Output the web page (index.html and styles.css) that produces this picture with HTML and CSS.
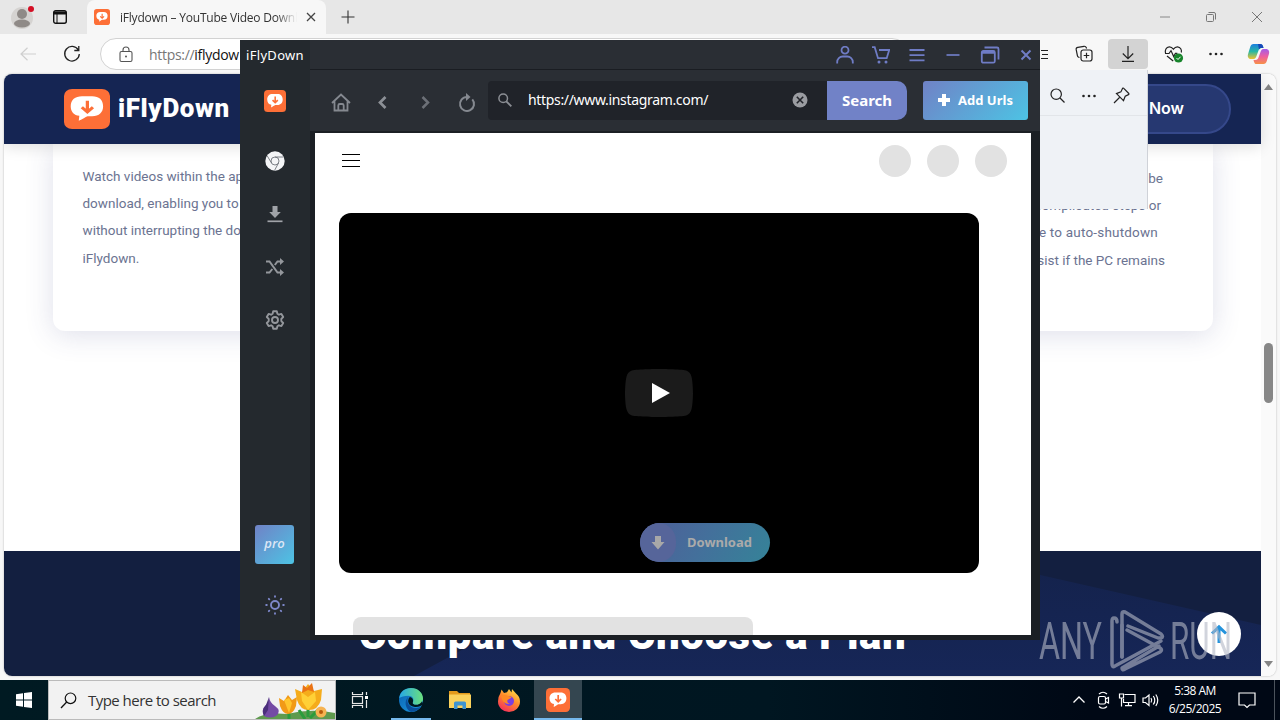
FILE: index.html
```html
<!DOCTYPE html>
<html lang="en">
<head>
    <meta charset="UTF-8">
    <meta name="viewport" content="width=device-width, initial-scale=1.0">
    <title>iFlyDown</title>
    <link rel="stylesheet" href="styles.css">
</head>
<body>
    <svg class="defs">
        <linearGradient id="edgeBlue" x1="0" y1="0" x2="1" y2="1"><stop offset="0" stop-color="#0b5fb0"/><stop offset="1" stop-color="#1b9de2"/></linearGradient>
        <linearGradient id="edgeTop" x1="0" y1="0" x2="1" y2="0"><stop offset="0" stop-color="#25a8e8"/><stop offset="1" stop-color="#6be07c"/></linearGradient>
        <linearGradient id="fox" x1="0.8" y1="0" x2="0.2" y2="1"><stop offset="0" stop-color="#ffe14a"/><stop offset="0.45" stop-color="#ff8a2a"/><stop offset="1" stop-color="#f5285f"/></linearGradient>
        <linearGradient id="copA" x1="0" y1="0" x2="0" y2="1"><stop offset="0" stop-color="#1c7fe0"/><stop offset="0.5" stop-color="#28b7a4"/><stop offset="1" stop-color="#f2c230"/></linearGradient>
        <linearGradient id="copB" x1="0" y1="0" x2="0" y2="1"><stop offset="0" stop-color="#a35be8"/><stop offset="0.5" stop-color="#ee5ea0"/><stop offset="1" stop-color="#f79147"/></linearGradient>
        <symbol id="logo" viewBox="0 0 24 24" preserveAspectRatio="none">
            <rect width="24" height="24" rx="4.2" fill="#fd6f37"/>
            <path d="M9.4 4.4h5.3c3.6 0 5.7 2.2 5.7 5.9s-2.1 5.9-5.7 6h-2.4c-1.2.6-2.5 1.600-4.600 2.800l.3-3c-2.800-.4-4.500-2.500-4.500-5.800 0-3.700 2.300-5.900 5.900-5.900z" fill="#fff"/>
            <path d="M12.200 7v6.500M9.300 11l2.900 2.800 2.900-2.800" fill="none" stroke="#fd6f37" stroke-width="1.700"/>
        </symbol>
    </svg>

    <div class="browser">
        <div class="tab-strip">
            <svg class="avatar" width="26" height="26" viewBox="0 0 26 26"><circle cx="12" cy="14" r="11" fill="#d5d3d1"/><circle cx="12" cy="10" r="5" fill="#8f8a87"/><ellipse cx="12" cy="19.500" rx="8" ry="4" fill="#8f8a87"/><circle cx="21" cy="5" r="3" fill="#d40f25"/></svg>
            <svg class="tab-actions" width="16" height="16" viewBox="0 0 16 16"><rect x="1.700" y="1.700" width="12.600" height="12.600" rx="2" fill="none" stroke="#111" stroke-width="1.400"/><path d="M2 3h12v2H2zM5 5v9" fill="#111" stroke="#111" stroke-width="1"/></svg>
            <div class="tab">
                <svg width="16" height="16"><use href="#logo"/></svg>
                <span class="tab-title">iFlydown – YouTube Video Downloader</span>
                <svg width="10" height="10" viewBox="0 0 10 10"><path d="M1 1l8 8M9 1L1 9" stroke="#444" stroke-width="1.300"/></svg>
            </div>
            <svg class="new-tab" width="14" height="14" viewBox="0 0 14 14"><path d="M7 0.500v13M0.500 7h13" stroke="#333" stroke-width="1.100"/></svg>
            <div class="win-buttons">
                <svg width="12" height="12" viewBox="0 0 12 12"><path d="M1 6h10" stroke="#888"/></svg>
                <svg width="12" height="12" viewBox="0 0 12 12"><g fill="none" stroke="#777"><rect x="1.500" y="3.500" width="7" height="7" rx="1"/><path d="M3.500 1.500h5.500a1.500 1.500 0 0 1 1.500 1.500v5.500"/></g></svg>
                <svg width="12" height="12" viewBox="0 0 12 12"><path d="M1 1l10 10M11 1L1 11" stroke="#777"/></svg>
            </div>
        </div>

        <div class="toolbar">
            <svg class="back" width="16" height="14" viewBox="0 0 16 14"><path d="M16 7H1M7.500 0.800L1 7l6.500 6.200" fill="none" stroke="#cfcfcf" stroke-width="1.200"/></svg>
            <svg class="reload" width="18" height="18" viewBox="0 0 18 18"><path d="M15.300 5A7.300 7.300 0 1 0 16.300 9M15.800 1v4.500h-4.500" fill="none" stroke="#222" stroke-width="1.300"/></svg>
            <div class="address">
                <svg width="14" height="17" viewBox="0 0 14 17"><rect x="1" y="5.500" width="12" height="10" rx="1.500" fill="none" stroke="#555" stroke-width="1.100"/><path d="M4 5.500V4a3 3 0 0 1 6 0v1.500" fill="none" stroke="#555" stroke-width="1.100"/><circle cx="7" cy="10.500" r="1" fill="#555"/></svg>
                <span class="address-text"><i>https://</i>iflydow</span>
            </div>
            <div class="toolbar-icons">
                <span><svg width="18" height="18" viewBox="0 0 18 18"><path d="M10 5.500h7M11 9.500h6M10 13.500h7M1 6l3.500-.5L6 2l2 4M1 6l3 3-.7 5L8 12" fill="none" stroke="#222" stroke-width="1.200"/></svg></span>
                <span><svg width="18" height="18" viewBox="0 0 18 18"><g fill="none" stroke="#222" stroke-width="1.200"><path d="M4.500 12.500l-.8-.3a2 2 0 0 1-1.300-1.600L1.200 4.700a2 2 0 0 1 1.600-2.300l6.200-1.100a2 2 0 0 1 2.200 1.200l.4 1"/><rect x="6" y="5" width="11" height="11" rx="2.200"/><path d="M11.500 7.700v5.600M8.700 10.500h5.600"/></g></svg></span>
                <span class="pressed"><svg width="14" height="18" viewBox="0 0 14 18"><path d="M7 1v12.500M1.800 8.500L7 13.700l5.200-5.200M1 16.400h12" fill="none" stroke="#222" stroke-width="1.200"/></svg></span>
                <span class="health"><svg width="20" height="18" viewBox="0 0 20 18"><path d="M1.500 8.200C.8 5.300 2 2 5.300 1.800 7.300 1.700 8.500 3 9.400 4.200c.9-1.200 2.100-2.500 4.100-2.400 3 .2 4.400 3 3.800 5.700M3 11l6.200 5M1 8.500h4L7 5.600l2.700 6 1.700-3.200h2" fill="none" stroke="#222" stroke-width="1.200"/><circle cx="14.500" cy="13" r="4.600" fill="#17842b"/><path d="M12.500 13l1.500 1.500 2.600-2.800" fill="none" stroke="#fff"/></svg></span>
                <span><svg width="14" height="4" viewBox="0 0 14 4"><g fill="#222"><circle cx="1.500" cy="2" r="1.300"/><circle cx="7" cy="2" r="1.300"/><circle cx="12.500" cy="2" r="1.300"/></g></svg></span>
                <span class="copilot"><svg width="23" height="22" viewBox="0 0 23 22"><path d="M6.500 1h7c1.500 0 2.100 1 2.600 2.600l.4 1.400h-2c-1.700 0-2.500 1-3 2.500L9.500 13c-.5 1.500-1.200 3-3 3H4C1.500 16 .3 13.800 1 11.200L3.200 4C3.800 2 4.800 1 6.500 1z" fill="url(#copA)"/><path d="M16.500 21h-7c-1.500 0-2.100-1-2.600-2.600L6.500 17h2c1.700 0 2.500-1 3-2.500L13.500 9c.5-1.500 1.200-3 3-3H19c2.500 0 3.700 2.200 3 4.800L19.800 18c-.6 2-1.600 3-3.300 3z" fill="url(#copB)"/><path d="M11 1h2.500c1.500 0 2.100 1 2.600 2.600l.4 1.400h-2c-1.200 0-2 .6-2.500 1.500z" fill="#1749b8"/></svg></span>
            </div>
        </div>

        <div class="viewport">
            <div class="page">
                <div class="site-header">
                    <svg class="site-logo" width="46" height="40"><use href="#logo"/></svg>
                    <span class="site-name">iFlyDown</span>
                    <span class="cta">Download Now</span>
                </div>
                <div class="feature-area">
                    <div class="feature-card">
                        <p>Watch videos within the app as they<br>download, enabling you to preview<br>without interrupting the download in<br>iFlydown.</p>
                        <p class="right-copy"><span>be</span><span>complicated steps or</span><span>e to auto-shutdown</span><span>sist if the PC remains</span></p>
                    </div>
                </div>
                <div class="plans">
                    <h2>Compare and Choose a Plan</h2>
                </div>
            </div>
            <div class="scrollbar">
                <svg width="9" height="6" viewBox="0 0 9 6"><path d="M0 6L4.500 0 9 6z" fill="#858585"/></svg>
                <div class="thumb"></div>
                <svg width="9" height="6" viewBox="0 0 9 6"><path d="M0 0L4.500 6 9 0z" fill="#858585"/></svg>
            </div>
        </div>

        <div class="downloads-panel">
            <div class="downloads-head">
                <svg width="15" height="15" viewBox="0 0 15 15"><circle cx="6.200" cy="6.200" r="5.200" fill="none" stroke="#222" stroke-width="1.200"/><path d="M10 10l4.500 4.500" stroke="#222" stroke-width="1.200"/></svg>
                <svg width="14" height="4" viewBox="0 0 14 4"><g fill="#222"><circle cx="1.500" cy="2" r="1.300"/><circle cx="7" cy="2" r="1.300"/><circle cx="12.500" cy="2" r="1.300"/></g></svg>
                <svg width="17" height="17" viewBox="0 0 17 17"><path d="M10.500 1.200l5.300 5.300c.3.400.2.900-.3 1.100l-3.300 1.600-1.700 4.400-7-7 4.400-1.700 1.600-3.300c.2-.5.700-.7 1-.4zM6.500 10.500L1 16" fill="none" stroke="#222" stroke-width="1.200"/></svg>
            </div>
        </div>

        <div class="to-top">
            <svg width="20" height="20" viewBox="0 0 20 20"><path d="M10 19V3M3 9.500L10 2.800l7 6.700" fill="none" stroke="#2493dc" stroke-width="3"/></svg>
        </div>
        <svg class="watermark" width="200" height="66" viewBox="0 0 200 66">
            <g fill="#b4b8c6" font-family="Roboto, sans-serif" font-size="51">
                <text x="4" y="51" textLength="63" lengthAdjust="spacingAndGlyphs">ANY</text>
                <text x="135" y="51" textLength="62" lengthAdjust="spacingAndGlyphs">RUN</text>
            </g>
            <g fill="none" stroke="#b4b8c6" stroke-width="3.500" stroke-linejoin="round" stroke-linecap="round">
                <path d="M82 14q0-4-3-4-2 0-2 3v43q0 4 3 2l46-25"/>
                <path d="M87 49V6q0-3 3-2l36 22q3 3 0 4l-3 0L93 18"/>
                <path d="M87 17v32M92 22l33 18q3 2 0 4L90 61q-3 2-3-1l37-22"/>
            </g>
        </svg>
    </div>

    <div class="app">
        <div class="sidebar">
            <div class="app-title">iFlyDown</div>
            <div class="side-logo"><svg width="22" height="22"><use href="#logo"/></svg></div>
            <div class="side-item"><svg width="20" height="20" viewBox="0 0 20 20"><circle cx="10" cy="10" r="9.700" fill="#f4f5f7"/><g fill="none" stroke="#70757c" stroke-width="0.900"><circle cx="10" cy="10" r="4"/><path d="M10 6h8.500M6.500 12L2.300 5M13.500 12l-4 7.500"/></g></svg></div>
            <div class="side-item"><svg width="16" height="18" viewBox="0 0 16 18"><path d="M5.500 1h5v6h3.300L8 13 2.200 7h3.300z" fill="#a0a3a8"/><path d="M.5 16.300h15" stroke="#a0a3a8" stroke-width="1.700"/></svg></div>
            <div class="side-item"><svg width="20" height="18" viewBox="0 0 20 18"><g fill="none" stroke="#94979c" stroke-width="2"><path d="M1 3.500h3.500l8 11H17M1 14.500h3.500L7.300 11M9.800 7l2.700-3.500H17"/></g><path d="M15 0l4 3.500L15 7zM15 11l4 3.500-4 3.500z" fill="#94979c"/></svg></div>
            <div class="side-item"><svg width="20" height="20" viewBox="0 0 20 20"><g fill="none" stroke="#94979c" stroke-width="1.900" stroke-linejoin="round"><path d="M8.200 1.200h3.600l.6 2.600 1.500.9 2.500-.8 1.800 3.100-1.900 1.900v2.200l1.900 1.900-1.800 3.100-2.500-.8-1.500.9-.6 2.600H8.200l-.6-2.600-1.500-.9-2.500.8L1.800 13l1.900-1.900V8.900L1.800 7l1.800-3.100 2.500.8 1.500-.9z"/><circle cx="10" cy="10" r="3"/></g></svg></div>
            <div class="side-bottom">
                <div class="pro">pro</div>
                <svg width="20" height="20" viewBox="0 0 20 20"><g fill="none" stroke="#7d87c9" stroke-width="1.900" stroke-linecap="round"><circle cx="10" cy="10" r="4"/><path d="M10 1.200v.6M10 18.200v.6M1.200 10h.6M18.200 10h.6M3.800 3.800l.5.5M15.700 15.700l.5.5M3.800 16.200l.5-.5M15.700 4.300l.5-.5"/></g></svg>
            </div>
        </div>
        <div class="main">
            <div class="app-bar">
                <svg width="18" height="18" viewBox="0 0 18 18"><g fill="none" stroke="#6f7cc5" stroke-width="1.800"><circle cx="9" cy="4.200" r="3.500"/><path d="M1.200 17.500v-1.500a5.500 5.500 0 0 1 5.500-5.500h4.600a5.500 5.500 0 0 1 5.500 5.500v1.500"/></g></svg>
                <svg width="18" height="18" viewBox="0 0 18 18"><path d="M0 1.200h2.700L6 12.200h8.700L17.200 4H7" fill="none" stroke="#6f7cc5" stroke-width="1.800"/><circle cx="7" cy="16" r="1.500" fill="#6f7cc5"/><circle cx="14" cy="16" r="1.500" fill="#6f7cc5"/></svg>
                <svg width="18" height="18" viewBox="0 0 18 18"><path d="M1.500 4h15M1.500 9.200h15M1.500 14.400h15" stroke="#6f7cc5" stroke-width="1.800"/></svg>
                <svg width="18" height="18" viewBox="0 0 18 18"><path d="M2.500 9h13" stroke="#6f7cc5" stroke-width="1.700"/></svg>
                <svg width="20" height="18" viewBox="0 0 20 18"><g fill="none" stroke="#6f7cc5" stroke-width="1.800"><rect x="1.800" y="5" width="13" height="11.700" rx="1.500"/><path d="M4.500 1.500h12.500q1.500 0 1.500 1.500v10.500M2 6.800h13"/></g></svg>
                <svg width="18" height="18" viewBox="0 0 18 18"><path d="M4.500 4.500l9 9M13.500 4.500l-9 9" stroke="#6f7cc5" stroke-width="2"/></svg>
            </div>
            <div class="app-tools">
                <div class="nav">
                    <svg width="20" height="20" viewBox="0 0 20 20"><g fill="none" stroke="#858990" stroke-width="1.800"><path d="M1 10L10 1.500l9 8.500M3.500 8v9.500h13V8"/><path d="M7.300 17.500v-5q0-1.500 1.500-1.500h2.400q1.500 0 1.500 1.500v5"/></g></svg>
                    <svg width="20" height="20" viewBox="0 0 20 20"><path d="M12.500 4L7 9.500l5.500 5.500" fill="none" stroke="#8c9096" stroke-width="2.700"/></svg>
                    <svg width="20" height="20" viewBox="0 0 20 20"><path d="M7.500 4L13 9.500 7.500 15" fill="none" stroke="#6c7077" stroke-width="2.500"/></svg>
                    <svg width="20" height="20" viewBox="0 0 20 20"><path d="M10 4a7 7 0 1 0 5.300 2.400" fill="none" stroke="#858990" stroke-width="2"/><path d="M9 0v8l4.500-4z" fill="#858990"/></svg>
                </div>
                <div class="url-box">
                    <svg width="14" height="14" viewBox="0 0 14 14"><circle cx="5.200" cy="5.200" r="4.300" fill="none" stroke="#8b8e94" stroke-width="1.500"/><path d="M8.300 8.300l5 5" stroke="#8b8e94" stroke-width="1.900"/></svg>
                    <span class="url">https://www.instagram.com/</span>
                    <svg width="16" height="16" viewBox="0 0 16 16"><circle cx="8" cy="8" r="7.500" fill="#9a9ca1"/><path d="M4.800 4.800l6.400 6.400M11.200 4.800l-6.400 6.400" stroke="#22242a" stroke-width="1.600"/></svg>
                </div>
                <button class="search">Search</button>
                <button class="add-urls"><svg width="12" height="12" viewBox="0 0 12 12"><path d="M6 0v12M0 6h12" stroke="#fff" stroke-width="4"/></svg><span>Add Urls</span></button>
            </div>
            <div class="content">
                <div class="content-top">
                    <div class="burger"><i></i><i></i><i></i></div>
                    <div class="dots"><i></i><i></i><i></i></div>
                </div>
                <div class="video">
                    <svg width="68" height="48" viewBox="0 0 68 48"><path d="M66.500 7.700c-.8-2.900-2.500-5.400-5.400-6.200C55.800.1 34 0 34 0S12.200.1 6.900 1.500C4 2.300 2.300 4.800 1.500 7.700.1 13 0 24 0 24s.1 11 1.500 16.300c.8 2.900 2.500 5.400 5.400 6.200C12.200 47.900 34 48 34 48s21.800-.1 27.100-1.500c2.900-.8 4.600-3.300 5.400-6.200C67.900 35 68 24 68 24s-.1-11-1.500-16.300z" fill="#1b1b1b"/><path d="M45 24L27 14v20" fill="#fff"/></svg>
                    <div class="download-pill">
                        <span class="pill-icon"><svg width="14" height="16" viewBox="0 0 14 16"><path d="M4 1h6v6h3.500L7 14.500.5 7H4z" fill="#a8a8a8"/></svg></span>
                        <span class="pill-text">Download</span>
                    </div>
                </div>
                <div class="skeleton"></div>
            </div>
        </div>
    </div>

    <div class="taskbar">
        <div class="task start"><svg width="16" height="16" viewBox="0 0 16 16"><path d="M0 2.300L7 1.200v6.300H0zM8 1l8-1v7.500H8zM0 8.500h7v6.300l-7-1zM8 8.500h8V16l-8-1.100z" fill="#fff"/></svg></div>
        <div class="task-search">
            <svg width="17" height="17" viewBox="0 0 17 17"><circle cx="10.500" cy="6.300" r="5.300" fill="none" stroke="#111" stroke-width="1.200"/><path d="M6.700 10L1 16" stroke="#111" stroke-width="1.300"/></svg>
            <span>Type here to search</span>
            <svg class="flowers" width="80" height="38" viewBox="0 0 80 38">
                <path d="M0 38q10-7 32-5 24-6 48-1v6z" fill="#5f9a4e"/>
                <path d="M34 38V28M53 36V24M50 38l-6-9M55 37l9-9" stroke="#2b9c3c" stroke-width="3"/>
                <path d="M14 16q1 6 6 9 7 5 1 10-6 3-12 0-3-6 1-10 4-4 4-9z" fill="#744aa5"/>
                <path d="M14 16l-1 13-4 6q-3-6 2-11z" fill="#4b2f7b"/>
                <path d="M24 17l5 3 4-6 4 5 5-3-1 9q-3 8-8 8t-8-8z" fill="#f19a17"/>
                <path d="M29 19l5-2 3 5-3 10z" fill="#ffc52e"/>
                <path d="M40 8l7 3 6-8 6 7 8-2-1 11q-3 10-12 10-9 0-12-10z" fill="#f5ac1b"/>
                <path d="M46 11l7 5 7-5 1 9-8 9-6-9z" fill="#ffd036"/>
                <path d="M48 4l4 3 5-5 2 9-6-2-6 3z" fill="#ea7314"/>
                <circle cx="66" cy="31" r="5.500" fill="#f6b351"/><circle cx="66" cy="31" r="2" fill="#b85b0a"/>
            </svg>
        </div>
        <div class="task view"><svg width="18" height="16" viewBox="0 0 18 16"><g fill="none" stroke="#e6e6e6" stroke-width="1.200"><rect x="1.500" y="4.500" width="10" height="7"/><path d="M1.500 0v2.500h10V0M1.500 16v-2.500h10V16M15.500 0v3M15.500 8v8"/></g><path d="M14 4h3v3h-3z" fill="#fff"/></svg></div>
        <div class="task running"><svg width="26" height="26" viewBox="0 0 26 26"><circle cx="13" cy="13" r="12" fill="url(#edgeBlue)"/><path d="M1.200 11C2 4.500 7 1 13 1c7 0 12 5 12 10.500 0 4-3 6.300-6.500 6.300-3 0-4.300-1.300-3.700-2.400 1.800-3.500-.3-6.700-4.500-6.700-4 0-7.300 1-9.100 2.300z" fill="url(#edgeTop)"/><path d="M10 10c-2 5 1 11 8 11 2 0 4-.7 5.500-1.700C21 23 17 25 13 25 7 22 6 14 10 10z" fill="#0a4f9b"/><path d="M14.800 15.400c1-2.500-.3-5-3-5.500-3.600 4-1 9.500 5.200 10 4 .2 6.300-1 7.500-2.500l1.500 2-2-5.200c-2 3.500-5.500 3.600-5.500 3.600-3 0-4.300-1.300-3.700-2.400z" fill="#001820"/></svg></div>
        <div class="task"><svg width="22" height="20" viewBox="0 0 22 20"><path d="M0 1h8l2 2h11v5H0z" fill="#e49b1c"/><path d="M0 4.500h22V18H0z" fill="#fbd25c"/><path d="M5 19v-6q0-1.500 1.500-1.500h9Q17 11.500 17 13v6h-3.500v-3.500h-5V19z" fill="#3f94d0"/></svg></div>
        <div class="task"><svg width="24" height="24" viewBox="0 0 24 24"><path d="M3.500 5l1-3.500L7 5l3-.8 2-3.200 2.500 3.500L15 1l4 4.500q4 3 4 8A11 10.500 0 0 1 1 13.500Q1 8.500 3.500 5z" fill="url(#fox)"/><circle cx="12" cy="13" r="5" fill="#7a3fe0"/><path d="M4 8q4-2 7 0 3 0 3.500 1.500l-4 2.500q-1 3 2.500 4-7 1-9-8z" fill="#ff8a24"/></svg></div>
        <div class="task running active"><svg width="24" height="24"><use href="#logo"/></svg></div>
        <div class="tray">
            <svg width="24" height="20" viewBox="0 0 24 20"><path d="M6.500 12.500L12 7l5.500 5.500" fill="none" stroke="#fff" stroke-width="1.300"/></svg>
            <svg width="24" height="20" viewBox="0 0 24 20"><g fill="none" stroke="#fff" stroke-width="1.200"><rect x="7.500" y="6.500" width="7" height="7.500" rx="1.500"/><path d="M14.500 9l3-1.500v5.500l-3-1.500M8 4q4-3.500 8 0M8 16.500q4 3.500 8 0"/></g></svg>
            <svg width="24" height="20" viewBox="0 0 24 20"><g fill="none" stroke="#fff" stroke-width="1.200"><path d="M9.500 4.500H20v8H8.500V9M13.500 12.500v3M10 15.700h7"/><path d="M4.500 4h4v4h-4zM6.500 8v8.500"/></g></svg>
            <svg width="24" height="20" viewBox="0 0 24 20"><path d="M4 8h2.500L10 5v10.500L6.500 12.500H4zM12 8q1.500 2.200 0 4.500M14.300 6q3 4.200 0 8.500M16.800 4.500q4 5.700 0 11.500" fill="none" stroke="#fff" stroke-width="1.200"/></svg>
        </div>
        <div class="clock"><span>5:38 AM</span><span>6/25/2025</span></div>
        <svg class="notify" width="18" height="18" viewBox="0 0 18 18"><path d="M1 2h16v12h-5.500L9 16.500 6.500 14H1z" fill="none" stroke="#fff" stroke-width="1.200"/></svg>
    </div>
</body>
</html>
```
FILE: styles.css
```css
* {
    box-sizing: border-box;
}

body {
    margin: 0;
    width: 1280px;
    height: 720px;
    overflow: hidden;
    position: relative;
    font-family: "Open Sans", "Noto Sans", sans-serif;
    background: #f7f7f7;
}

svg {
    display: block;
    flex: none;
}

.defs {
    position: absolute;
    width: 0;
    height: 0;
}

/* Browser */
.browser {
    height: 680px;
    position: relative;
}

.tab-strip {
    height: 34px;
    background: #e7e7e7;
    display: flex;
    align-items: center;
}

.avatar {
    margin-left: 10px;
}

.tab-actions {
    margin: 0 19px 0 16px;
}

.tab {
    width: 239px;
    height: 34px;
    background: #f7f7f7;
    border-radius: 8px 8px 0 0;
    display: flex;
    align-items: center;
    padding: 0 10px 0 7px;
}

.tab-title {
    width: 178px;
    margin: 0 9px 0 10px;
    font-size: 12px;
    letter-spacing: -0.22px;
    color: #333;
    white-space: nowrap;
    overflow: hidden;
    -webkit-mask-image: linear-gradient(90deg, #000 88%, transparent);
    mask-image: linear-gradient(90deg, #000 88%, transparent);
}

.new-tab {
    margin-left: 15px;
}

.win-buttons {
    margin-left: auto;
    margin-right: 17px;
    display: flex;
    gap: 34px;
}

.toolbar {
    height: 40px;
    display: flex;
    align-items: center;
    background: #f7f7f7;
}

.back {
    margin-left: 20px;
}

.reload {
    margin: 0 19px 0 27px;
}

.address {
    width: 808px;
    height: 32px;
    background: #fff;
    border: 1px solid #d2d2d2;
    border-radius: 16px;
    display: flex;
    align-items: center;
    padding-left: 18px;
}

.address-text {
    margin-left: 16px;
    font-size: 14px;
    letter-spacing: -0.3px;
    color: #111;
}

.address-text i {
    font-style: normal;
    color: #777;
}

.toolbar-icons {
    margin-left: auto;
    display: flex;
}

.toolbar-icons span {
    width: 40px;
    height: 30px;
    margin: 0 2px;
    border-radius: 4px;
    display: flex;
    align-items: center;
    justify-content: center;
}

.toolbar-icons .pressed {
    background: #d3d3d3;
}

.toolbar-icons .health {
    padding-left: 3px;
}

.toolbar-icons .copilot {
    margin: 0 2px 0 0;
}

.viewport {
    height: 602px;
    margin: 0 4px;
    display: flex;
    background: #fff;
    border-radius: 8px;
    overflow: hidden;
    box-shadow: 0 0 2px rgba(0, 0, 0, 0.3);
}

.page {
    width: 1257px;
    display: flex;
    flex-direction: column;
    font-family: Roboto, sans-serif;
}

.site-header {
    height: 70px;
    flex: none;
    background: #152553;
    display: flex;
    align-items: center;
    padding: 0 30px 0 60px;
    position: relative;
    box-shadow: 0 3px 14px rgba(0, 0, 0, 0.13);
    z-index: 1;
}

.site-name {
    margin-left: 8px;
    padding-bottom: 2px;
    color: #fff;
    font-size: 26px;
    font-weight: 900;
    letter-spacing: 0.6px;
}

.cta {
    margin-left: auto;
    width: 190px;
    height: 50px;
    border: 2px solid #35488a;
    border-radius: 25px;
    background: #263871;
    color: #fff;
    font-family: Inter, Roboto, sans-serif;
    font-size: 16px;
    font-weight: 600;
    display: flex;
    align-items: center;
    justify-content: flex-end;
    padding: 0 45px 2px 0;
    white-space: nowrap;
}

.feature-area {
    height: 407px;
    flex: none;
    padding: 0 48px 0 49px;
}

.feature-card {
    height: 187px;
    border-radius: 0 0 12px 12px;
    box-shadow: 0 4px 28px rgba(60, 65, 130, 0.17);
    display: flex;
    justify-content: space-between;
    padding: 19px 48px 0 29.5px;
}

.feature-card p {
    margin: 0;
    font-size: 13.5px;
    line-height: 27.2px;
    color: #6b7391;
    white-space: nowrap;
}

.feature-card .right-copy {
    padding-top: 2px;
    display: flex;
    flex-direction: column;
    align-items: flex-end;
}

.right-copy span:nth-child(1) {
    padding-right: 2px;
}

.right-copy span:nth-child(2) {
    padding-right: 4px;
}

.right-copy span:nth-child(3) {
    padding-right: 7px;
    letter-spacing: 0.2px;
}

.plans {
    position: relative;
    height: 125px;
    flex: none;
    background: #131f40;
    padding-top: 59px;
}

.plans::before {
    content: "";
    position: absolute;
    inset: 0;
    background: linear-gradient(#14224b, #162657);
    clip-path: polygon(410px 100%, 640px 0, 930px 0, 100% 74px, 100% 100%);
}

.plans h2 {
    position: relative;
    margin: 0;
    text-align: center;
    font-size: 42px;
    font-weight: 900;
    line-height: 50px;
    letter-spacing: 0.57px;
    color: #fff;
}

.scrollbar {
    width: 15px;
    background: #fafafa;
    display: flex;
    flex-direction: column;
    align-items: center;
    padding: 10px 0 9px;
}

.thumb {
    width: 9px;
    height: 60px;
    margin-top: 253px;
    margin-bottom: auto;
    border-radius: 5px;
    background: #878787;
}

.downloads-panel {
    position: absolute;
    left: 788px;
    top: 70px;
    width: 360px;
    height: 139px;
    background: #eff2f6;
    border-right: 1px solid #cfd2d8;
    z-index: 2;
}

.downloads-head {
    height: 46px;
    border-bottom: 1px solid #e2e5e9;
    display: flex;
    align-items: center;
    justify-content: flex-end;
    gap: 17px;
    padding: 6px 17px 0 0;
}

.to-top {
    position: absolute;
    left: 1197px;
    top: 612px;
    width: 44px;
    height: 44px;
    border-radius: 50%;
    background: #fff;
    display: flex;
    align-items: center;
    justify-content: center;
}

.watermark {
    position: absolute;
    left: 1035px;
    top: 608px;
    opacity: 0.6;
}

/* Downloader window */
.app {
    position: absolute;
    left: 240px;
    top: 40px;
    width: 800px;
    height: 600px;
    background: #1b1f24;
    display: flex;
    font-family: "Noto Sans", sans-serif;
    z-index: 5;
}

.sidebar {
    width: 70px;
    background: #24292e;
    display: flex;
    flex-direction: column;
    align-items: center;
}

.app-title {
    height: 30px;
    line-height: 30px;
    font-size: 13px;
    letter-spacing: 0.3px;
    color: #fff;
}

.side-logo {
    height: 62px;
    margin-bottom: 2px;
    display: flex;
    align-items: center;
}

.side-item {
    height: 53px;
    display: flex;
    align-items: center;
}

.side-bottom {
    margin-top: auto;
    padding: 0 1px 25px 0;
    display: flex;
    flex-direction: column;
    align-items: center;
    gap: 31px;
}

.pro {
    width: 39px;
    height: 39px;
    line-height: 37px;
    border-radius: 3px;
    background: linear-gradient(135deg, #7082c6, #4dc3e4);
    color: #dbe6f5;
    font-family: "Open Sans", sans-serif;
    font-size: 13px;
    font-style: italic;
    font-weight: 600;
    text-align: center;
}

.main {
    flex: 1;
    display: flex;
    flex-direction: column;
}

.app-bar {
    height: 30px;
    background: #2a2e34;
    border-bottom: 1px solid #1a1d22;
    display: flex;
    align-items: center;
    justify-content: flex-end;
    gap: 18.3px;
    padding-right: 5px;
}

.app-bar svg:nth-child(5) {
    margin: 0 -1px;
}

.app-tools {
    height: 61px;
    background: #2a2e34;
    display: flex;
    align-items: center;
    padding: 0 12px 0 21px;
}

.nav {
    display: flex;
    gap: 22px;
    padding-top: 4px;
}

.url-box {
    width: 339px;
    height: 39px;
    margin-left: 11px;
    background: #202329;
    border-radius: 4px 0 0 4px;
    display: flex;
    align-items: center;
    padding: 0 19px 2px 10px;
}

.url {
    flex: 1;
    margin-left: 16px;
    color: #fff;
    font-size: 14px;
    letter-spacing: -0.33px;
}

.search,
.add-urls {
    height: 39px;
    border: none;
    padding: 0;
    color: #fff;
    font-family: "Noto Sans", sans-serif;
    font-weight: 700;
}

.search {
    width: 80px;
    padding-bottom: 1px;
    background: #7182c7;
    border-radius: 0 10px 10px 0;
    font-size: 15px;
}

.add-urls {
    width: 105px;
    margin-left: 16px;
    padding-bottom: 2px;
    border-radius: 3px;
    background: linear-gradient(135deg, #7082c6, #4dc3e4);
    font-size: 13px;
    display: flex;
    align-items: center;
    justify-content: center;
    gap: 8px;
}

.content {
    width: 716px;
    height: 502px;
    margin: 2px 0 0 5px;
    background: #fff;
    overflow: hidden;
}

.content-top {
    height: 80px;
    padding: 12px 24px 0 27px;
    display: flex;
    justify-content: space-between;
}

.burger {
    width: 18px;
    padding-top: 9px;
    display: flex;
    flex-direction: column;
    gap: 5px;
}

.burger i {
    height: 1px;
    background: #000;
}

.dots {
    display: flex;
    gap: 16px;
}

.dots i {
    width: 32px;
    height: 32px;
    border-radius: 50%;
    background: #e2e2e2;
}

.video {
    position: relative;
    width: 640px;
    height: 360px;
    margin-left: 24px;
    border-radius: 12px;
    background: #000;
    display: flex;
    align-items: center;
    justify-content: center;
}

.download-pill {
    position: absolute;
    left: 301px;
    top: 310px;
    width: 130px;
    height: 39px;
    border-radius: 20px;
    overflow: hidden;
    background: linear-gradient(120deg, #505d98, #43709b 50%, #358398);
    display: flex;
    align-items: center;
}

.pill-icon {
    width: 36px;
    height: 39px;
    border-radius: 20px;
    background: #56659a;
    display: flex;
    align-items: center;
    justify-content: center;
}

.pill-text {
    margin-left: 11px;
    padding-bottom: 2px;
    color: #aaa;
    font-size: 13px;
    font-weight: 700;
}

.skeleton {
    width: 400px;
    height: 30px;
    margin: 44px 0 0 38px;
    border-radius: 8px;
    background: #e2e2e2;
}

/* Taskbar */
.taskbar {
    height: 40px;
    background: linear-gradient(90deg, #001a22, #001621 60%, #000815 85%);
    display: flex;
    color: #fff;
}

.task {
    width: 48px;
    margin-right: 1px;
    display: flex;
    align-items: center;
    justify-content: center;
}

.start {
    margin-right: 0;
}

.view {
    margin-right: 3px;
}

.running {
    background: linear-gradient(#76b9ed, #76b9ed) center bottom / 40px 2px no-repeat;
}

.active {
    background: linear-gradient(#76b9ed, #76b9ed) center bottom / 48px 2px no-repeat #344650;
}

.task-search {
    width: 288px;
    background: #f2f2f2;
    border: 1px solid #bbb;
    display: flex;
    align-items: center;
    padding-left: 11px;
    color: #333;
    font-size: 15px;
}

.task-search span {
    margin-left: 11px;
    letter-spacing: -0.53px;
}

.flowers {
    margin-left: auto;
}

.tray {
    margin-left: auto;
    display: flex;
    align-items: center;
}

.clock {
    width: 64px;
    display: flex;
    flex-direction: column;
    align-items: center;
    justify-content: center;
    font-size: 12px;
    line-height: 18px;
    letter-spacing: -0.5px;
}

.notify {
    margin: 11px 18px 0 11px;
}

.taskbar::after {
    content: "";
    width: 5px;
    border-left: 1px solid #4b535c;
}
```
